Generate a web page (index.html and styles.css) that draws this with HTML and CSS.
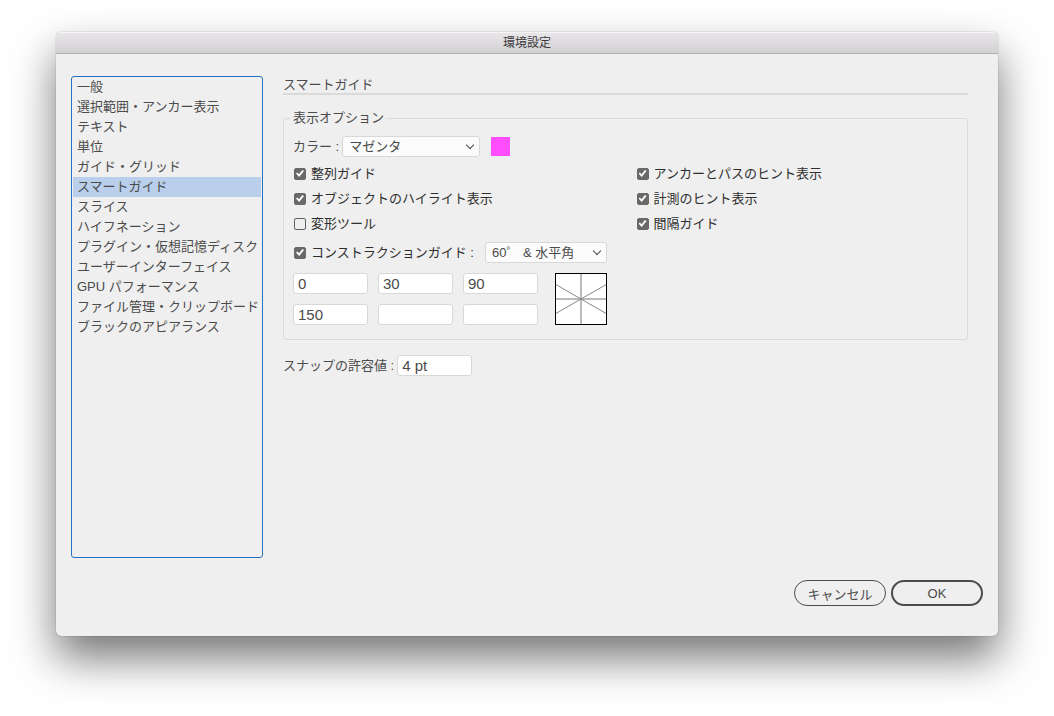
FILE: index.html
```html
<!DOCTYPE html>
<html lang="ja">
<head>
    <meta charset="UTF-8">
    <meta name="viewport" content="width=device-width, initial-scale=1.0">
    <title>環境設定</title>
    <link rel="stylesheet" href="styles.css">
</head>
<body>
    <div class="window">
        <div class="titlebar">環境設定</div>
        <div class="content">
            <nav class="sidebar">
                <a href="#">一般</a>
                <a href="#">選択範囲・アンカー表示</a>
                <a href="#">テキスト</a>
                <a href="#">単位</a>
                <a href="#">ガイド・グリッド</a>
                <a href="#" class="active">スマートガイド</a>
                <a href="#">スライス</a>
                <a href="#">ハイフネーション</a>
                <a href="#">プラグイン・仮想記憶ディスク</a>
                <a href="#">ユーザーインターフェイス</a>
                <a href="#">GPU パフォーマンス</a>
                <a href="#">ファイル管理・クリップボード</a>
                <a href="#">ブラックのアピアランス</a>
            </nav>
            <main class="panel">
                <h1>スマートガイド</h1>
                <fieldset>
                    <legend>表示オプション</legend>
                    <div class="row">
                        <label for="color">カラー :</label>
                        <span class="select color-select">
                            <select id="color">
                                <option>マゼンタ</option>
                            </select>
                        </span>
                        <span class="swatch"></span>
                    </div>
                    <div class="checks">
                        <label class="check"><input type="checkbox" checked>整列ガイド</label>
                        <label class="check"><input type="checkbox" checked>アンカーとパスのヒント表示</label>
                        <label class="check"><input type="checkbox" checked>オブジェクトのハイライト表示</label>
                        <label class="check"><input type="checkbox" checked>計測のヒント表示</label>
                        <label class="check"><input type="checkbox">変形ツール</label>
                        <label class="check"><input type="checkbox" checked>間隔ガイド</label>
                    </div>
                    <div class="row construction">
                        <label class="check"><input type="checkbox" checked>コンストラクションガイド :</label>
                        <span class="select angle-select">
                            <select aria-label="角度">
                                <option>60゜ &amp; 水平角</option>
                            </select>
                        </span>
                    </div>
                    <div class="angles">
                        <div class="angle-grid">
                            <input type="text" value="0" aria-label="角度 1">
                            <input type="text" value="30" aria-label="角度 2">
                            <input type="text" value="90" aria-label="角度 3">
                            <input type="text" value="150" aria-label="角度 4">
                            <input type="text" value="" aria-label="角度 5">
                            <input type="text" value="" aria-label="角度 6">
                        </div>
                        <svg class="preview" viewBox="0 0 50 50">
                            <path class="axis" d="M25 0V50M0 25H50"/>
                            <path class="diagonal" d="M0 10.6L50 39.4M0 39.4L50 10.6"/>
                        </svg>
                    </div>
                </fieldset>
                <div class="row snap">
                    <label for="snap">スナップの許容値 :</label>
                    <input type="text" id="snap" value="4 pt">
                </div>
            </main>
        </div>
        <div class="footer">
            <button type="button">キャンセル</button>
            <button type="button" class="default">OK</button>
        </div>
    </div>
</body>
</html>
```
FILE: styles.css
```css
* {
    box-sizing: border-box;
}

body {
    display: flex;
    min-height: 100vh;
    margin: 0;
    padding: 32px 56px 80px;
    background-color: #fff;
    color: #4b4b4b;
    font-family: "Liberation Sans", "Noto Sans CJK JP", sans-serif;
    font-size: 13px;
    line-height: 20px;
}

input,
select,
button {
    color: inherit;
    font-family: inherit;
    font-size: 13px;
}

.window {
    flex: 1;
    display: flex;
    flex-direction: column;
    background-color: #efefef;
    border-radius: 5px;
    box-shadow: 0 0 1px rgba(0, 0, 0, 0.6), 0 22px 44px rgba(0, 0, 0, 0.54);
}

.titlebar {
    height: 22px;
    border-top: 1px solid #f4f4f4;
    border-bottom: 1px solid #b1afb1;
    border-radius: 5px 5px 0 0;
    background: linear-gradient(#e8e6e8, #d2d0d2);
    color: #3c3a3c;
    font-size: 12px;
    line-height: 20px;
    text-align: center;
}

.content {
    flex: 1;
    display: flex;
    gap: 20px;
    padding: 22px 30px 22px 15px;
}

/* Category list */
.sidebar {
    flex: 0 0 192px;
    padding: 0 1px;
    border: 1px solid #2274c2;
    border-radius: 3px;
}

.sidebar a {
    display: block;
    padding-left: 4px;
    color: inherit;
    text-decoration: none;
    white-space: nowrap;
}

.sidebar .active {
    background-color: #b9cfeb;
}

/* Settings panel */
.panel {
    flex: 1;
    min-width: 0;
}

h1 {
    margin: 0 0 15px;
    border-bottom: 2px solid #dadada;
    font-size: 13px;
    font-weight: normal;
    line-height: 17px;
}

fieldset {
    min-width: 0;
    margin: 0;
    padding: 10px 9px 14px;
    border: 1px solid #dadada;
    border-radius: 3px;
}

legend {
    margin-left: -3px;
    padding: 0 3px;
    line-height: 16px;
}

.row {
    display: flex;
    align-items: center;
    height: 21px;
}

.select {
    position: relative;
    height: 21px;
}

.select select {
    width: 100%;
    height: 100%;
    padding: 0 6px;
    border: 1px solid #d8d8d8;
    border-radius: 3px;
    background-color: #fbfbfb;
    appearance: none;
}

/* Arrow on top of the select */
.select::after {
    content: "";
    position: absolute;
    top: 6px;
    right: 7px;
    width: 5px;
    height: 5px;
    border-right: 1px solid #4b4b4b;
    border-bottom: 1px solid #4b4b4b;
    transform: rotate(45deg);
    pointer-events: none;
}

.color-select {
    width: 138px;
    margin: 0 11px 0 3px;
}

.swatch {
    width: 19px;
    height: 19px;
    background-color: #ff4dff;
}

.checks {
    display: grid;
    grid-template-columns: 1fr 1fr;
    column-gap: 20px;
    grid-auto-rows: 25px;
    margin: 4px 0 6px;
}

.check {
    display: flex;
    align-items: center;
    gap: 5px;
    color: #2e2e2e;
}

.check input {
    display: grid;
    place-items: center;
    width: 12px;
    height: 12px;
    margin: 0 0 0 1px;
    border: 1px solid #5f5f5f;
    border-radius: 2px;
    appearance: none;
}

.check input:checked {
    border-color: #696969;
    background-color: #696969;
}

.check input:checked::before {
    content: "";
    width: 8px;
    height: 8px;
    background-color: #fff;
    clip-path: polygon(0 50%, 17% 36%, 38% 60%, 80% 6%, 100% 20%, 40% 94%);
}

.angle-select {
    width: 122px;
    margin-left: 11px;
}

.angles {
    display: flex;
    gap: 17px;
    margin-top: 10px;
}

.angle-grid {
    display: grid;
    grid-template-columns: repeat(3, 75px);
    gap: 10px;
}

input[type="text"] {
    width: 75px;
    height: 21px;
    padding: 0 4px;
    border: 1px solid #d8d8d8;
    border-radius: 3px;
    background-color: #fff;
    font-size: 15px;
}

.preview {
    width: 52px;
    height: 52px;
    border: 1px solid #000;
    background-color: #fff;
    fill: none;
}

.axis {
    stroke: #777;
}

.diagonal {
    stroke: #888;
}

.snap {
    margin-top: 15px;
    gap: 3px;
}

/* Dialog buttons */
.footer {
    display: flex;
    justify-content: flex-end;
    gap: 5px;
    padding: 0 15px 30px;
}

.footer button {
    width: 92px;
    height: 26px;
    padding: 0;
    border: 1px solid #4b4b4b;
    border-radius: 13px;
    background: none;
}

.footer .default {
    border-width: 2px;
}
```
